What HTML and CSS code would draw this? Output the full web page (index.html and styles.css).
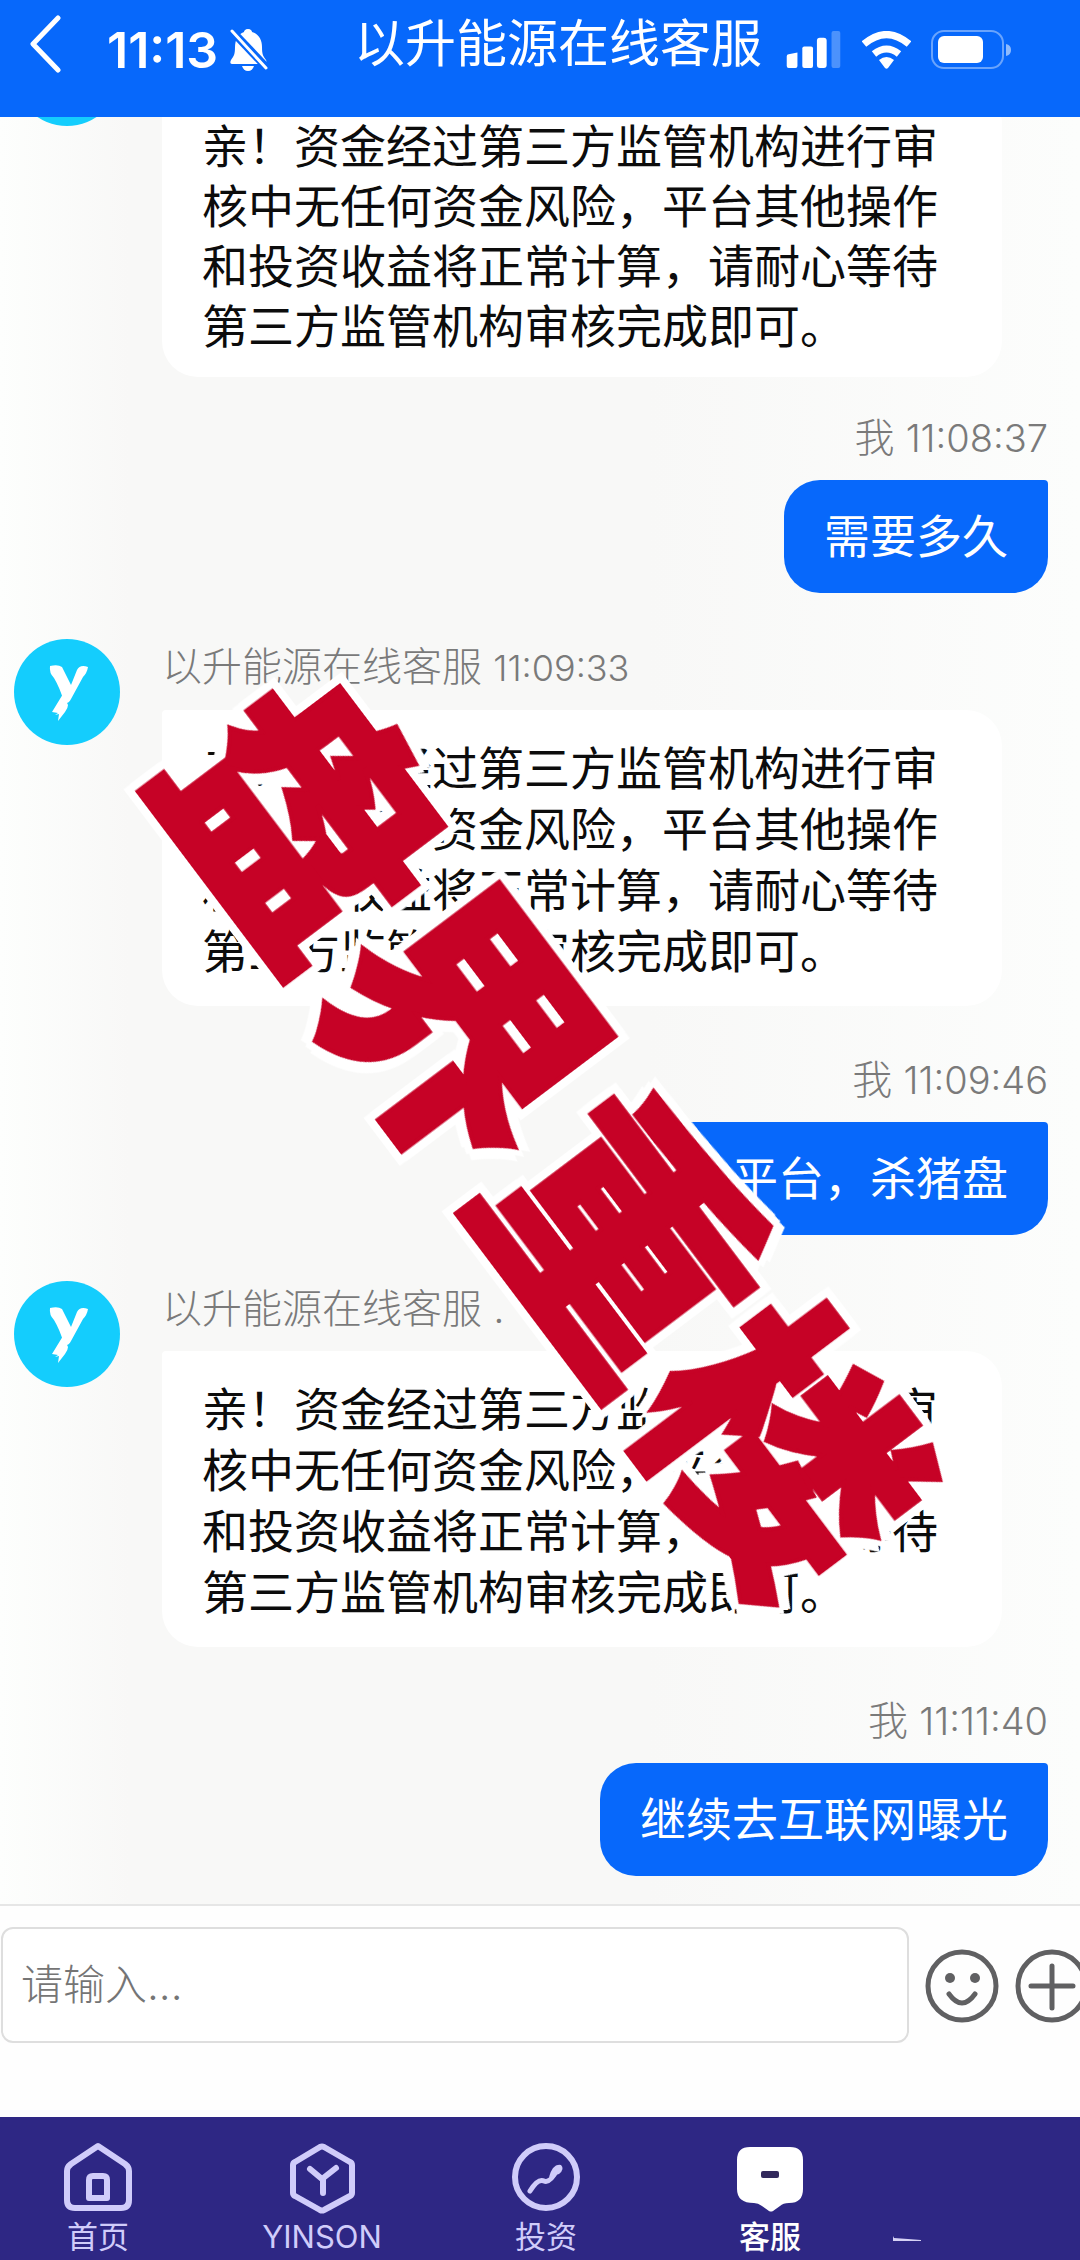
FILE: index.html
```html
<!DOCTYPE html>
<html lang="zh-CN">
<head>
  <meta charset="UTF-8">
  <meta name="viewport" content="width=device-width, initial-scale=1.0">
  <title>以升能源在线客服</title>
  <link rel="stylesheet" href="styles.css">
</head>
<body>
  <header class="header">
    <button class="back" aria-label="返回">
      <svg width="32" height="58" viewBox="0 0 32 58" fill="none" stroke="#fff" stroke-width="5" stroke-linecap="round" stroke-linejoin="round"><path d="M28 3 3 29l25 26"/></svg>
    </button>
    <span class="clock">11:13</span>
    <svg class="bell" width="38" height="44" viewBox="0 0 38 44">
      <path fill="#fff" d="M18 1c3 0 4 2 4 3 7 2 10 8 10 15 0 7 1 9 4 13 1 2 0 4-2 4H2c-2 0-2-2-1-4 3-4 4-6 4-13C5 12 8 6 14 4c0-1 1-3 4-3zM12 38h12c-1 3-3 5-6 5s-5-2-6-5z"/>
      <path stroke="#0768fb" stroke-width="8" d="M0 1l37 39"/>
      <path stroke="#fff" stroke-width="3" stroke-linecap="round" d="M2 3l34 37"/>
    </svg>
    <h1 class="title">以升能源在线客服</h1>
    <div class="status">
      <svg width="56" height="37" viewBox="0 0 56 38" fill="#fff">
        <path d="M0 26q0-2 2-2l9-2v14q0 2-2 2H2q-2 0-2-2z"/>
        <rect x="16" y="16" width="11" height="22" rx="2"/>
        <rect x="31" y="7" width="10" height="31" rx="3"/>
        <rect x="46" y="0" width="9" height="38" rx="2" opacity=".28"/>
      </svg>
      <svg width="49" height="38" viewBox="0 0 49 38">
        <g fill="none" stroke="#fff" stroke-width="7"><path d="M2 13q22.500-19 45 0"/><path d="M12 23q12.500-10 25 0"/></g>
        <path fill="#fff" d="M17 29q7.500-6 15 0l-6 8q-1.500 1.500-3 0z"/>
      </svg>
      <svg width="80" height="39" viewBox="0 0 80 39">
        <rect x="1" y="1" width="71" height="37" rx="12" fill="none" stroke="#fff" stroke-opacity=".4" stroke-width="2"/>
        <rect x="7" y="6" width="45" height="27" rx="6" fill="#fff"/>
        <path fill="#fff" opacity=".55" d="M75 14q5 1 5 6t-5 6z"/>
      </svg>
    </div>
  </header>

  <main class="chat">
    <section class="message service oldest">
      <svg class="avatar" viewBox="0 0 106 106"><circle cx="53" cy="53" r="53" fill="#14cdfd"/></svg>
      <p class="bubble">亲！资金经过第三方监管机构进行审核中无任何资金风险，平台其他操作和投资收益将正常计算，请耐心等待第三方监管机构审核完成即可。</p>
    </section>

    <section class="message mine">
      <p class="meta">我 <time>11:08:37</time></p>
      <p class="bubble">需要多久</p>
    </section>

    <section class="message service">
      <svg class="avatar" viewBox="0 0 106 106">
        <circle cx="53" cy="53" r="53" fill="#14cdfd"/>
        <path fill="#fff" d="M36 27q8-2 12 1l9 18 6-15q3-6 11-3-1 6-5 10L57 60q-3 6-7 3Q46 49 40 39q-5-5-4-12zM49 55l5 11q0 3-3 7l-7 9 1-7-4 1 3-2-6-1z"/>
      </svg>
      <div class="content">
        <p class="meta">以升能源在线客服 <time>11:09:33</time></p>
        <p class="bubble">亲！资金经过第三方监管机构进行审核中无任何资金风险，平台其他操作和投资收益将正常计算，请耐心等待第三方监管机构审核完成即可。</p>
      </div>
    </section>

    <section class="message mine">
      <p class="meta">我 <time>11:09:46</time></p>
      <p class="bubble wide">平台，杀猪盘</p>
    </section>

    <section class="message service">
      <svg class="avatar" viewBox="0 0 106 106">
        <circle cx="53" cy="53" r="53" fill="#14cdfd"/>
        <path fill="#fff" d="M36 27q8-2 12 1l9 18 6-15q3-6 11-3-1 6-5 10L57 60q-3 6-7 3Q46 49 40 39q-5-5-4-12zM49 55l5 11q0 3-3 7l-7 9 1-7-4 1 3-2-6-1z"/>
      </svg>
      <div class="content">
        <p class="meta">以升能源在线客服 .</p>
        <p class="bubble">亲！资金经过第三方监管机构进行审核中无任何资金风险，平台其他操作和投资收益将正常计算，请耐心等待第三方监管机构审核完成即可。</p>
      </div>
    </section>

    <section class="message mine">
      <p class="meta">我 <time>11:11:40</time></p>
      <p class="bubble">继续去互联网曝光</p>
    </section>

    <div class="watermark">盘界重楼</div>
  </main>

  <form class="composer">
    <input class="field" type="text" placeholder="请输入..." aria-label="请输入">
    <button class="tool" type="button" aria-label="表情">
      <svg width="74" height="76" viewBox="0 0 74 76" fill="none" stroke="#606062" stroke-width="5" stroke-linecap="round">
        <circle cx="37" cy="38" r="34"/>
        <path d="M24 46q13 18 26 0"/>
        <g fill="#606062" stroke="none"><circle cx="25" cy="30" r="5"/><circle cx="50" cy="30" r="5"/></g>
      </svg>
    </button>
    <button class="tool" type="button" aria-label="更多">
      <svg width="74" height="76" viewBox="0 0 74 76" fill="none" stroke="#606062" stroke-width="5" stroke-linecap="round">
        <circle cx="37" cy="38" r="34"/>
        <path d="M37 18v42M16 38h42"/>
      </svg>
    </button>
  </form>

  <nav class="tabs">
    <a class="tab" href="#home">
      <svg width="74" height="74" viewBox="0 0 74 74" fill="none" stroke="#d0ccfa" stroke-width="6" stroke-linejoin="round">
        <path d="M37 6 10 24q-4 3-4 7v29q0 8 8 8h46q8 0 8-8V31q0-4-4-7z"/>
        <path d="M28 58V40q0-4 4-4h10q4 0 4 4v18z"/>
      </svg>
      首页
    </a>
    <a class="tab" href="#yinson">
      <svg width="74" height="74" viewBox="0 0 74 74" fill="none" stroke="#d0ccfa" stroke-width="6" stroke-linecap="round" stroke-linejoin="round">
        <path d="M35 7q2-1 4 0l26 15q2 1 2 3v28q0 2-2 3L39 70q-2 1-4 0L10 56q-2-1-2-3V25q0-2 2-3z"/>
        <path d="M25 29l12 10 14-11M38 39v14"/>
      </svg>
      YINSON
    </a>
    <a class="tab" href="#invest">
      <svg width="74" height="74" viewBox="0 0 74 74" fill="none" stroke="#d0ccfa">
        <circle cx="37" cy="37" r="31" stroke-width="6"/>
        <path d="M21 51q8-13 14-10t14-13" stroke-width="5" stroke-linecap="round"/>
        <path d="M40 37q4-14 12-12 4 4-2 9z" fill="#d0ccfa" stroke="none"/>
      </svg>
      投资
    </a>
    <a class="tab active" href="#service">
      <svg width="74" height="74" viewBox="0 0 74 74">
        <path fill="#fff" d="M17 7h40q13 0 13 13v29q0 14-14 14-6 0-9 3l-7 5q-2 1-4 0l-7-5q-4-3-8-3Q4 63 4 49V20Q4 7 17 7z"/>
        <rect x="28" y="31" width="18" height="7" rx="2" fill="#32295c"/>
      </svg>
      客服
    </a>
    <a class="tab more" href="#more" aria-label="更多">
      <svg width="28" height="6" viewBox="0 0 28 6" fill="#d6d2f5"><path d="M0 0l1 2 14 1 13 1v1H0z"/></svg>
    </a>
  </nav>
</body>
</html>
```
FILE: styles.css
```css
* {
  box-sizing: border-box;
}

body {
  margin: 0;
  height: 100vh;
  display: flex;
  flex-direction: column;
  overflow: hidden;
  background: #fefefe;
  color: #0c0c0c;
  font-family: Inter, "Noto Sans CJK SC", sans-serif;
}

h1, p {
  margin: 0;
}

button {
  padding: 0;
  border: 0;
  background: none;
}

svg {
  display: block;
  flex: none;
}

/* Top bar */
.header {
  display: flex;
  align-items: center;
  padding: 0 69px 18px 30px;
  min-height: 117px;
  background: #0768fb;
  color: #fff;
}

.back {
  margin: 0 45px 12px 0;
}

.clock {
  font-size: 50px;
  font-weight: 600;
  line-height: 56px;
}

.bell {
  margin-left: 12px;
}

.title {
  margin-left: auto;
  padding-bottom: 12px;
  font-size: 51px;
  font-weight: 400;
  line-height: 60px;
}

.status {
  display: flex;
  align-items: center;
  gap: 20px;
  margin-left: 24px;
}

/* Messages, pinned to the newest one */
.chat {
  position: relative;
  flex: 1;
  min-height: 0;
  display: flex;
  flex-direction: column;
  justify-content: flex-end;
  gap: 50px;
  padding: 0 32px 28px 14px;
  overflow: hidden;
  background: linear-gradient(90deg, #fdfefd, #f8f8f7 12%, #f8f8f7 60%, #fcfdfc);
}

.message {
  flex: none;
  display: flex;
}

.service {
  align-items: flex-start;
  gap: 42px;
  padding-right: 46px;
}

.mine {
  flex-direction: column;
  align-items: flex-end;
}

.avatar {
  width: 106px;
  height: 106px;
  margin-top: -4px;
}

.meta {
  margin-bottom: 18px;
  color: #7a7a7a;
  font-size: 40px;
  font-weight: 300;
  line-height: 48px;
}

.meta time {
  font-size: 36px;
}

.mine .meta time {
  font-size: 38px;
}

.bubble {
  padding: 28px 40px 24px;
  border-radius: 36px;
  background: #fff;
  font-size: 46px;
  line-height: 61px;
}

.service .bubble {
  border-top-left-radius: 4px;
}

.mine .bubble {
  padding: 26px 40px;
  border-top-right-radius: 4px;
  background: #0768fb;
  color: #fff;
}

.mine .wide {
  padding-left: 86px;
}

/* First message is scrolled partly under the top bar */
.oldest {
  margin-bottom: -13px;
}

.oldest .avatar {
  margin-top: -68px;
}

.oldest .bubble {
  padding-bottom: 21px;
  line-height: 60px;
}

.watermark {
  position: absolute;
  top: 57%;
  left: 50%;
  transform: translate(-50%, -50%) rotate(53deg);
  color: #c60226;
  font-size: 264px;
  font-weight: 900;
  line-height: 1;
  white-space: nowrap;
  -webkit-text-stroke: 4px #c60226;
  filter: drop-shadow(8px 0 0 #fff) drop-shadow(-8px 0 0 #fff) drop-shadow(0 8px 0 #fff) drop-shadow(0 -8px 0 #fff);
}

/* Input row */
.composer {
  display: flex;
  align-items: flex-start;
  gap: 16px;
  padding: 21px 0 74px 1px;
  border-top: 2px solid #e6e6e6;
  overflow: hidden;
}

.field {
  flex: 1;
  min-width: 0;
  padding: 27px 18px;
  border: 2px solid #dedede;
  border-radius: 12px;
  background: #fff;
  font: 300 42px/58px Inter, "Noto Sans CJK SC", sans-serif;
}

.field::placeholder {
  color: #757575;
}

.tool {
  margin-top: 21px;
}

.tool:last-child {
  margin-right: -9px;
}

/* Bottom tabs */
.tabs {
  display: flex;
  margin: 0 -26px 0 -14px;
  padding: 23px 0 5px;
  background: #2e2784;
}

.tab {
  flex: 1 0 20%;
  display: flex;
  flex-direction: column;
  align-items: center;
  gap: 5px;
  color: #d0ccfa;
  font-size: 31px;
  line-height: 36px;
  text-decoration: none;
}

.tab.active {
  color: #fff;
  font-weight: 500;
}

.tab.more {
  align-items: flex-start;
  justify-content: flex-end;
  padding: 0 0 13px 11px;
}
```
